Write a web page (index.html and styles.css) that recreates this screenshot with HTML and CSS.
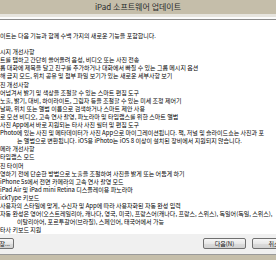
FILE: index.html
```html
<!DOCTYPE html>
<html>
<head>
  <meta charset="UTF-8">
  <title>iPad 소프트웨어 업데이트</title>
  <link rel="stylesheet" href="styles.css">
</head>
<body>

  <div class="window">
    <div class="titlebar">iPad 소프트웨어 업데이트</div>
    <div class="frame-top"></div>

    <div class="notes">
      <p>이트는 다음 기능과 함께 수백 가지의 새로운 기능을 포함합니다.</p>
      <p class="blank"></p>
      <p>시지 개선사항</p>
      <p>트를 탭하고 간단히 쓸어올려 음성, 비디오 또는 사진 전송</p>
      <p>룹 대화에 제목을 달고 친구를 추가하거나 대화에서 빠질 수 있는 그룹 메시지 옵션</p>
      <p>해 금지 모드, 위치 공유 및 첨부 파일 보기가 있는 새로운 세부사항 보기</p>
      <p>진 개선사항</p>
      <p>어넘겨서 밝기 및 색상을 조절할 수 있는 스마트 편집 도구</p>
      <p>노출, 밝기, 대비, 하이라이트, 그림자 등을 조절할 수 있는 미세 조정 제어기</p>
      <p>날짜, 위치 또는 앨범 이름으로 검색하거나 스마트 제안 사용</p>
      <p>로 모션 비디오, 고속 연사 촬영, 파노라마 및 타임랩스를 위한 스마트 앨범</p>
      <p>사진 App에서 바로 지원되는 타사 사진 필터 및 편집 도구</p>
      <p>Photo에 있는 사진 및 메타데이터가 사진 App으로 마이그레이션됩니다. 책, 저널 및 슬라이드쇼는 사진과 포</p>
      <p class="wrap">는 앨범으로 변환됩니다. iOS용 iPhoto는 iOS 8 이상이 설치된 장비에서 지원되지 않습니다.</p>
      <p>메라 개선사항</p>
      <p>타임랩스 모드</p>
      <p>진 타이머</p>
      <p>영하기 전에 단순한 방법으로 노출을 조절하여 사진을 밝게 또는 어둡게 하기</p>
      <p>iPhone 5s에서 전면 카메라의 고속 연사 촬영 모드</p>
      <p>iPad Air 및 iPad mini Retina 디스플레이용 파노라마</p>
      <p>ickType 키보드</p>
      <p>사용자의 스타일에 맞게, 수신자 및 App에 따라 사용자화된 자동 완성 입력</p>
      <p>자동 완성은 영어(오스트레일리아, 캐나다, 영국, 미국), 프랑스어(캐나다, 프랑스, 스위스), 독일어(독일, 스위스),</p>
      <p class="wrap">이탈리아어, 포르투갈어(브라질), 스페인어, 태국어에서 가능</p>
      <p>타사 키보드 지원</p>
    </div>

    <div class="footer">
      <button class="btn btn-save">저장...</button>
      <div class="footer__right">
        <button class="btn btn-next">다음(N)</button>
        <button class="btn btn-cancel">취소</button>
      </div>
    </div>
    <div class="frame-bottom"></div>
  </div>

</body>
</html>
```

FILE: styles.css
```css
body {
  margin: 0;
  font-family: "Noto Sans CJK KR", "Liberation Sans", sans-serif;
  background: #f0f0f0;
  overflow: hidden;
}

.window {
  width: 276px;
  height: 260px;
  display: flex;
  flex-direction: column;
  overflow: hidden;
}

.titlebar {
  height: 14px;
  line-height: 14px;
  background: #c5beaa;
  color: #2a2a2a;
  font-size: 8px;
  text-align: center;
  white-space: nowrap;
}

.frame-top {
  height: 5px;
  background: linear-gradient(to bottom, #e6e4de 0, #e6e4de 3px, #fbfbfb 3px);
  border-bottom: 1px solid #8c8c8c;
}

.notes {
  flex: 1;
  background: #fff;
  padding-top: 12px;
  font-size: 6px;
  line-height: 8.1px;
  color: #000;
  white-space: nowrap;
  overflow: hidden;
}

.notes p {
  margin: 0;
  height: 8.1px;
}

.notes .wrap {
  padding-left: 17px;
}

.footer {
  height: 16px;
  padding-top: 4px;
  display: flex;
  align-items: flex-start;
  justify-content: space-between;
  background: #f0f0f0;
  border-bottom: 1px solid #9a9a9a;
}

.footer__right {
  display: flex;
  gap: 6px;
  margin-right: -20px;
}

.btn {
  height: 11px;
  padding: 0;
  font-family: inherit;
  font-size: 6px;
  line-height: 9px;
  color: #111;
  background: linear-gradient(to bottom, #f6f6f6 0%, #e8e8e8 50%, #dcdcdc 51%, #d2d2d2 100%);
  border: 1px solid #707070;
  border-radius: 2px;
}

.btn-save {
  width: 34px;
  margin-left: -20px;
  text-align: right;
  padding-right: 3px;
}

.btn-next {
  width: 43px;
}

.btn-cancel {
  width: 44px;
}

.frame-bottom {
  height: 5px;
  background: #c5beaa;
}
```
